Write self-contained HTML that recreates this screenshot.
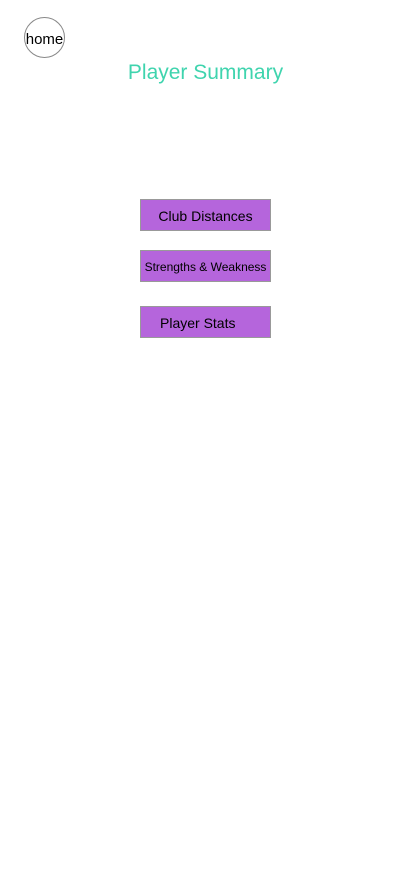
<!DOCTYPE html>
<html><head><meta charset="utf-8"><style>
body{margin:0;width:414px;height:896px;background:#fff;font-family:"Liberation Sans",sans-serif;position:relative;overflow:hidden}
.home{position:absolute;left:24px;top:17px;width:39px;height:39px;border:1px solid #888;border-radius:50%;font-size:15px;color:#000;display:flex;align-items:center;justify-content:center;padding-top:3px;box-sizing:content-box;height:36px}
h1{position:absolute;left:0;width:411px;top:61px;margin:0;text-align:center;font-weight:normal;font-size:21px;color:#3fd4ae}
.b{position:absolute;left:140px;width:129px;height:29px;padding-top:1px;background:#b565dc;border:1px solid #999;box-sizing:content-box;display:flex;align-items:center;justify-content:center;font-size:14px;color:#000}
</style></head><body>
<div class="home">home</div>
<h1>Player Summary</h1>
<div class="b" style="top:199px">Club Distances</div>
<div class="b" style="top:250px;font-size:12px">Strengths &amp; Weakness</div>
<div class="b" style="top:306px;justify-content:flex-start"><span style="margin-left:19px">Player Stats</span></div>
</body></html>
